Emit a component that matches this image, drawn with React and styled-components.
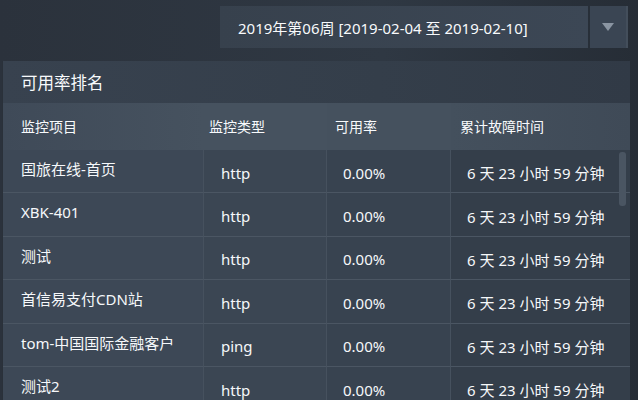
import React from "react";
import styled, { createGlobalStyle } from "styled-components";

const Global = createGlobalStyle`
  html, body { margin: 0; padding: 0; width: 638px; height: 400px; overflow: hidden; }
  body {
    background: #2a3039;
    font-family: "Noto Sans", "Open Sans", "Noto Sans CJK SC", sans-serif;
    color: #f4f6f8;
  }
`;

const Page = styled.div`
  width: 638px;
  height: 400px;
  display: flex;
  flex-direction: column;
  background: linear-gradient(90deg, #2b323c 0%, #2f3843 60%, #262d36 100%);
`;

const Toolbar = styled.div`
  flex-shrink: 0;
  display: flex;
  justify-content: flex-end;
  gap: 2px;
  padding: 6px 10px 0 0;
  height: 42px;
`;

const Select = styled.div`
  width: 368px;
  height: 42px;
  box-sizing: border-box;
  padding-left: 18px;
  display: flex;
  align-items: center;
  background: linear-gradient(90deg, #37414d 0%, #3c4755 100%);
  font-size: 15px;
  color: #f8fafc;
`;

const ArrowButton = styled.div`
  width: 36px;
  height: 42px;
  display: flex;
  align-items: center;
  justify-content: center;
  background: #3a4553;
  border-right: 2px solid #434e5b;
`;

const Panel = styled.div`
  flex-shrink: 0;
  margin: 13px 8px 0 2px;
  display: flex;
  flex-direction: column;
  background: linear-gradient(90deg, #353f4b 0%, #323b47 60%, #2f3843 100%);
  border-left: 1px solid #2a313a;
`;

const Title = styled.div`
  flex-shrink: 0;
  height: 42px;
  box-sizing: border-box;
  padding-left: 18px;
  display: flex;
  align-items: center;
  font-size: 16.5px;
  color: #f8fafc;
  background: linear-gradient(90deg, #38424f 0%, #343e4a 60%, #313a46 100%);
`;

const Table = styled.div`
  position: relative;
  flex-shrink: 0;
`;

const Grid = styled.div`
  display: grid;
  grid-template-columns: 201px 123px 124px 1fr;
`;

const HeadCell = styled.div`
  height: 47px;
  box-sizing: border-box;
  display: flex;
  align-items: center;
  padding-left: ${(p) => p.$pad}px;
  padding-bottom: 2px;
  font-size: 14px;
  color: #f8fafc;
  background: ${(p) => p.$bg};
`;

const Cell = styled.div`
  height: 43.4px;
  box-sizing: border-box;
  display: flex;
  align-items: center;
  padding-left: ${(p) => p.$pad}px;
  padding-top: ${(p) => (p.$first ? 0 : 3)}px;
  padding-bottom: ${(p) => (p.$first ? 5 : 0)}px;
  font-size: 15px;
  color: #f6f8fa;
  border-bottom: 1px solid #4b5663;
  border-right: ${(p) => (p.$last ? "none" : "1px solid #46515e")};
  background: ${(p) => p.$bg};
  white-space: nowrap;
`;

const Scroll = styled.div`
  position: absolute;
  right: 4px;
  top: 49px;
  width: 7px;
  height: 54px;
  border-radius: 3px;
  background: #4a5562;
`;

const cols = [
  { pad: 18, hpad: 18, bg: "#3d4856", hbg: "linear-gradient(90deg,#3f4a58,#46525f)" },
  { pad: 17, hpad: 5, bg: "#3b4653", hbg: "#46525f" },
  { pad: 16, hpad: 8, bg: "#384350", hbg: "#45515e" },
  { pad: 16, hpad: 9, bg: "#343e4a", hbg: "linear-gradient(90deg,#44505d,#3f4a57)" },
];

const headers = ["监控项目", "监控类型", "可用率", "累计故障时间"];

const rows = [
  ["国旅在线-首页", "http"],
  ["XBK-401", "http"],
  ["测试", "http"],
  ["首信易支付CDN站", "http"],
  ["tom-中国国际金融客户", "ping"],
  ["测试2", "http"],
];

export default function App() {
  return (
    <>
      <Global />
      <Page>
        <Toolbar>
          <Select>2019年第06周 [2019-02-04 至 2019-02-10]</Select>
          <ArrowButton>
            <svg width="12" height="8" viewBox="0 0 12 8">
              <path d="M0 0 H12 L6 8 Z" fill="#8a95a2" />
            </svg>
          </ArrowButton>
        </Toolbar>
        <Panel>
          <Title>可用率排名</Title>
          <Table>
            <Grid>
              {headers.map((h, i) => (
                <HeadCell key={h} $pad={cols[i].hpad} $bg={cols[i].hbg}>
                  {h}
                </HeadCell>
              ))}
              {rows.map((r, ri) => {
                const vals = [r[0], r[1], "0.00%", "6 天 23 小时 59 分钟"];
                return vals.map((v, ci) => (
                  <Cell
                    key={`${ri}-${ci}`}
                    $pad={cols[ci].pad}
                    $bg={cols[ci].bg}
                    $first={ci === 0}
                    $last={ci === 3}
                  >
                    {v}
                  </Cell>
                ));
              })}
            </Grid>
            <Scroll />
          </Table>
        </Panel>
      </Page>
    </>
  );
}
